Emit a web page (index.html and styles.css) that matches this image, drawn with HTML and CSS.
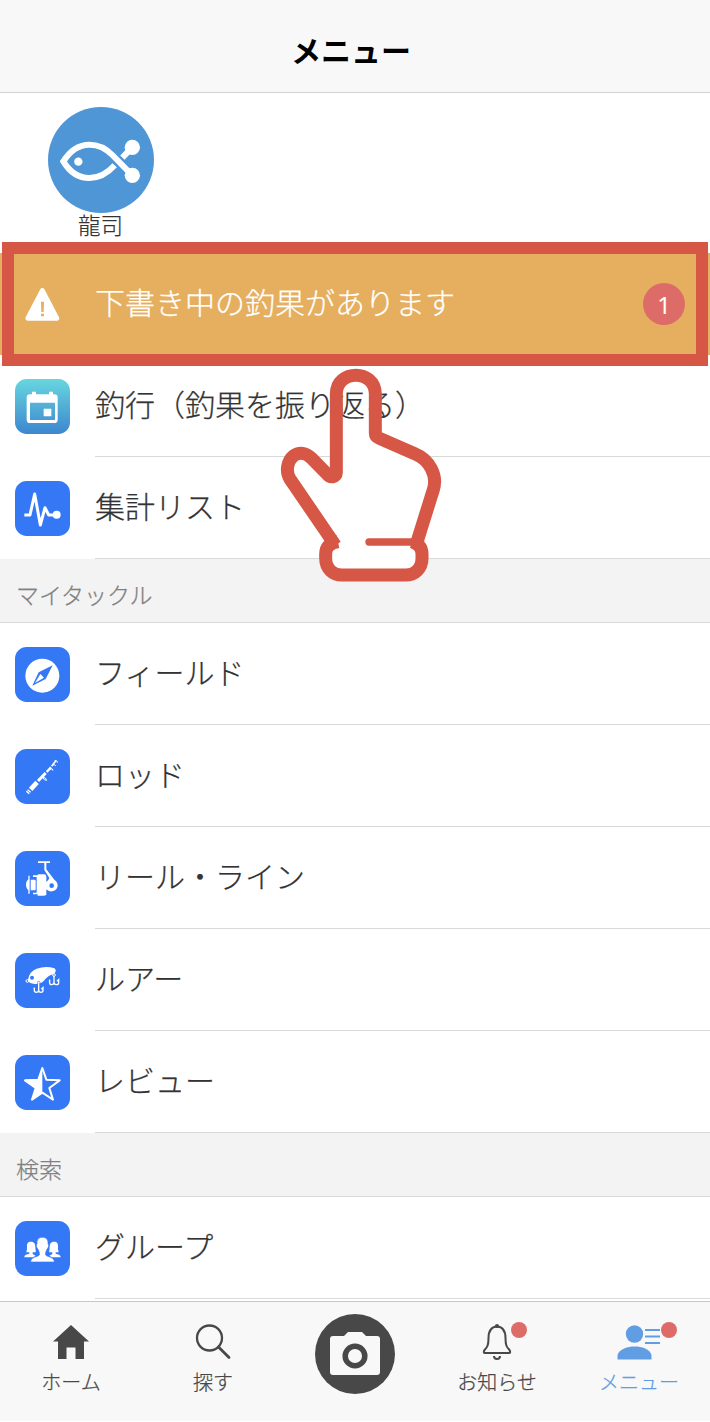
FILE: index.html
```html
<!DOCTYPE html>
<html lang="ja">
<head>
    <meta charset="UTF-8">
    <meta name="viewport" content="width=device-width, initial-scale=1.0">
    <title>メニュー</title>
    <link rel="stylesheet" href="styles.css">
</head>
<body>
    <header>
        <h1>メニュー</h1>
    </header>
    <main>
        <div class="profile">
            <svg class="avatar" viewBox="142 52 318 318">
                <circle cx="301" cy="211" r="159" fill="#4f96d6"/>
                <g fill="none" stroke="#fff" stroke-width="18">
                    <path d="M395 257L335 196Q305 165 266 165Q220 165 188 215Q218 265 266 265Q308 265 342 227"/>
                    <path d="M365 204L395 173"/>
                </g>
                <g fill="#fff">
                    <circle cx="395" cy="173" r="23"/>
                    <circle cx="395" cy="257" r="23"/>
                    <circle cx="233" cy="216" r="12.500"/>
                </g>
            </svg>
            <span class="user-name">龍司</span>
        </div>

        <div class="row draft">
            <svg class="icon" viewBox="0 0 165 165">
                <path d="M82 40L126 124H38Z" fill="#fff" stroke="#fff" stroke-width="14" stroke-linejoin="round"/>
                <path d="M78 74H87L86 105H79ZM78 110H87V118H78Z" fill="#e5af5f"/>
            </svg>
            <span class="label">下書き中の釣果があります</span>
            <span class="count">1</span>
            <div class="highlight"></div>
            <svg class="hand" viewBox="0 0 600 720">
                <path d="M229 285H350L470 312Q535 345 519 410L465 580L485 630Q480 675 440 675H245Q200 675 197 630L222 580L90 385Q70 340 100 318Q130 300 155 325L200 372Q229 380 229 370Z" fill="#fff"/>
                <g fill="none" stroke="#d65745" stroke-width="39" stroke-linejoin="round">
                    <path d="M226 586L90 387C76 364 82 333 100 318C118 305 138 308 155 325L201 372C211 385 229 382 229 368V131C231 57 344 57 346 131V250Q346 260 358 265L466 312C510 330 533 378 520 419L471 576"/>
                    <path d="M234 575C209 580 197 591 197 612V625C197 656 219 675 245 675H438C464 675 486 656 486 625V612C486 591 474 580 455 575"/>
                    <path d="M327 576H462" stroke-width="22" stroke-linecap="round"/>
                </g>
            </svg>
        </div>
        <div class="row">
            <svg class="icon" viewBox="0 0 165 165">
                <defs>
                    <linearGradient id="trip" x1="0" y1="0" x2="0" y2="1">
                        <stop offset="0" stop-color="#68d6df"/>
                        <stop offset="1" stop-color="#3c86cf"/>
                    </linearGradient>
                </defs>
                <rect width="165" height="165" rx="35" fill="url(#trip)"/>
                <path fill="#fff" fill-rule="evenodd" d="M45 46H51V38H63V46H102V38H114V46H118Q128 46 128 56V122Q128 132 118 132H45Q35 132 35 122V56Q35 46 45 46ZM45 71V123H120V71ZM86 89H109V112H86Z"/>
            </svg>
            <span class="label">釣行（釣果を振り返る）</span>
        </div>
        <div class="row">
            <svg class="icon" viewBox="0 0 165 165">
                <rect width="165" height="165" rx="35" fill="#3478f6"/>
                <path d="M28 102H45L59 39L76 132L90 80L101 102H120" fill="none" stroke="#fff" stroke-width="9" stroke-linejoin="round"/>
                <circle cx="125" cy="101" r="12" fill="#fff"/>
            </svg>
            <span class="label">集計リスト</span>
        </div>

        <h2>マイタックル</h2>
        <div class="row">
            <svg class="icon" viewBox="0 0 165 165">
                <rect width="165" height="165" rx="35" fill="#3478f6"/>
                <circle cx="82" cy="86" r="51" fill="#fff"/>
                <path d="M113 55L71 76L52 116L92 96Z" fill="#3478f6"/>
                <path d="M76 81L87 92L60 108Z" fill="#fff"/>
            </svg>
            <span class="label">フィールド</span>
        </div>
        <div class="row">
            <svg class="icon" viewBox="0 0 165 165">
                <rect width="165" height="165" rx="35" fill="#3478f6"/>
                <g fill="none" stroke="#fff">
                    <path d="M37 132L44 124" stroke-width="12" stroke-dasharray="4 2"/>
                    <path d="M47 121L66 100" stroke-width="14"/>
                    <path d="M69 96L92 72" stroke-width="9"/>
                    <path d="M95 69L108 55" stroke-width="7"/>
                    <path d="M110 52L122 36" stroke-width="5"/>
                    <path d="M82 84L91 87L95 94L88 92ZM105 60L112 60L114 65M111 48L119 47L122 51M119 34L126 36L127 41" stroke-width="3"/>
                </g>
            </svg>
            <span class="label">ロッド</span>
        </div>
        <div class="row">
            <svg class="icon" viewBox="0 0 165 165">
                <rect width="165" height="165" rx="35" fill="#3478f6"/>
                <g fill="#fff">
                    <path d="M69 31H105V36H94V55L118 86Q128 92 128 104Q127 116 115 120Q102 124 94 115V131Q92 134 84 134H68V130H54V125H65V78H54V73H67L70 70H88Q94 71 94 77V93Q101 87 103 81L88 57V36H69Z"/>
                    <path d="M47 86H59Q62 86 62 91V114Q62 118 59 118H47Z"/>
                    <path d="M42 84V118Q33 113 33 101Q33 89 42 84Z"/>
                    <path d="M40 74H44V128H40Z"/>
                </g>
                <circle cx="110" cy="104" r="7" fill="#3478f6"/>
            </svg>
            <span class="label">リール・ライン</span>
        </div>
        <div class="row">
            <svg class="icon" viewBox="0 0 165 165">
                <rect width="165" height="165" rx="35" fill="#3478f6"/>
                <path d="M39 80Q43 55 65 47Q93 38 118 46Q126 52 119 61Q102 67 91 78Q81 94 60 93Q40 91 39 80Z" fill="#fff"/>
                <circle cx="51" cy="74" r="6" fill="#3478f6"/>
                <g fill="none" stroke="#fff" stroke-width="4">
                    <circle cx="37" cy="84" r="4" stroke-width="3"/>
                    <circle cx="71" cy="89" r="4" stroke="#3478f6" stroke-width="2"/>
                    <circle cx="117" cy="66" r="4" stroke-width="3"/>
                    <path d="M71 91V115M57 109L58 104V112Q58 118 64 118Q71 118 71 111Q71 118 78 118Q84 118 84 112V104L79 109"/>
                    <path d="M117 69V92M103 86L104 80V89Q104 95 110 95Q117 95 117 88Q117 95 124 95Q131 95 131 89V80L126 85"/>
                </g>
            </svg>
            <span class="label">ルアー</span>
        </div>
        <div class="row">
            <svg class="icon" viewBox="0 0 165 165">
                <rect width="165" height="165" rx="35" fill="#3478f6"/>
                <path d="M82 39L94 74L134 76L103 99L114 134L82 113L51 134L62 99L30 76L70 74Z" fill="none" stroke="#fff" stroke-width="6" stroke-linejoin="round"/>
                <path d="M82 39V113L51 134L62 99L30 76L70 74Z" fill="#fff"/>
            </svg>
            <span class="label">レビュー</span>
        </div>

        <h2>検索</h2>
        <div class="row">
            <svg class="icon" viewBox="0 0 165 165">
                <rect width="165" height="165" rx="35" fill="#3478f6"/>
                <defs>
                    <path id="member" d="M48 62C58 62 61 69 61 79C61 86 63 88 62 94H53V99L62 104L54 109H28C28 101 36 100 43 98V94H34Q37 85 36 78C35 68 38 62 48 62Z"/>
                </defs>
                <g fill="#fff">
                    <use href="#member"/>
                    <use href="#member" transform="matrix(-1 0 0 1 165 0)"/>
                    <path d="M82 49C95 49 100 57 99 69C103 70 100 83 96 84C95 89 92 92 92 95V102C98 109 118 107 118 123H47C47 107 67 109 73 102V95C73 92 70 89 69 84C65 83 62 70 66 69C65 57 70 49 82 49Z" stroke="#3478f6" stroke-width="2"/>
                </g>
            </svg>
            <span class="label">グループ</span>
        </div>
    </main>
    <nav>
        <a class="tab">
            <svg viewBox="0 0 40 40">
                <path d="M20 3L38 19.500H33V37H24.500V25.500H15.500V37H7V19.500H2Z" fill="#484848"/>
            </svg>
            ホーム
        </a>
        <a class="tab">
            <svg viewBox="0 0 40 40">
                <circle cx="16.500" cy="16" r="12.500" fill="none" stroke="#484848" stroke-width="2.300"/>
                <path d="M25.500 25L36 35.500" stroke="#484848" stroke-width="2.800" stroke-linecap="round"/>
            </svg>
            探す
        </a>
        <a class="camera">
            <svg viewBox="0 0 80 80">
                <circle cx="40" cy="40" r="40" fill="#484848"/>
                <path d="M18 22H29L33 18H47L51 22H62Q65 22 65 25V58Q65 61 62 61H18Q15 61 15 58V25Q15 22 18 22Z" fill="#f8f8f8"/>
                <circle cx="40" cy="42" r="9.800" fill="none" stroke="#484848" stroke-width="5.500"/>
            </svg>
        </a>
        <a class="tab">
            <svg viewBox="0 0 40 40">
                <path d="M20 4.500C13 5 11.500 11 11.500 16C11.500 23 10.500 25 7.500 28Q6 31 8 31H32Q34 31 32.500 28C29.500 25 28.500 23 28.500 16C28.500 11 27 5 20 4.500Z" fill="none" stroke="#484848" stroke-width="2"/>
                <circle cx="20" cy="4" r="2" fill="#484848"/>
                <path d="M17 34Q17 37 20 37Q23 37 23 34" fill="none" stroke="#484848" stroke-width="2"/>
            </svg>
            お知らせ
            <span class="dot"></span>
        </a>
        <a class="tab active">
            <svg viewBox="0 0 40 40">
                <g fill="#609de3">
                    <circle cx="15.500" cy="12" r="8.700"/>
                    <path d="M-1.500 37.500V33C0 27 9 24.500 15.500 24.500C23 24.500 31 27 32.500 33V37.500Z"/>
                    <path d="M26 7H41V9H26ZM26 13.500H41V15.500H26ZM26 20H41V22H26Z"/>
                </g>
            </svg>
            メニュー
            <span class="dot"></span>
        </a>
    </nav>
</body>
</html>
```
FILE: styles.css
```css
* {
    box-sizing: border-box;
}

body {
    display: flex;
    flex-direction: column;
    height: 1421px;
    margin: 0;
    background-color: #fff;
    color: #333;
    font-family: 'Noto Sans CJK JP', sans-serif;
    font-weight: 300;
    -webkit-text-stroke: 0.25px;
    overflow: hidden;
}

header {
    height: 93px;
    flex: none;
    background-color: #f8f8f8;
    border-bottom: 1px solid #d3d3d3;
    text-align: center;
    padding-right: 8px;
}

h1 {
    margin: 0;
    padding-top: 6px;
    color: #000;
    font-size: 30px;
    line-height: 86px;
    font-weight: 700;
    -webkit-text-stroke: 0;
}

main {
    flex: 1;
    min-height: 0;
}

.profile {
    display: flex;
    flex-direction: column;
    align-items: center;
    width: 201px;
    height: 160px;
    padding-top: 14px;
}

.avatar {
    width: 106px;
    height: 106px;
    flex: none;
}

.user-name {
    font-size: 22.5px;
    line-height: 22px;
}

.row {
    display: flex;
    align-items: center;
    height: 102px;
    padding-left: 15px;
}

.icon {
    width: 55px;
    height: 55px;
    flex: none;
    margin-right: 25px;
}

.label {
    flex: 1;
    height: 102px;
    border-bottom: 1px solid #d9d9d9;
    font-size: 30px;
    line-height: 97px;
    white-space: nowrap;
}

.draft {
    position: relative;
    background-color: #e5af5f;
    color: #fff;
    padding-right: 25px;
}

.draft .label {
    border: none;
}

.count {
    width: 42px;
    height: 42px;
    border-radius: 50%;
    background-color: #dd6c68;
    font-family: 'Noto Sans', sans-serif;
    font-size: 24px;
    font-weight: 400;
    line-height: 44px;
    text-align: center;
    -webkit-text-stroke: 0;
}

/* tutorial frame and pointer */
.highlight {
    position: absolute;
    top: -11px;
    left: 2px;
    right: 2px;
    height: 124px;
    border: 12px solid #d65745;
}

.hand {
    position: absolute;
    top: 97px;
    left: 260px;
    width: 200px;
    height: 240px;
    z-index: 1;
}

h2 {
    height: 64px;
    margin: 0;
    padding: 4px 16px 0;
    background-color: #f3f3f3;
    border-bottom: 1px solid #d9d9d9;
    color: #808080;
    font-size: 23px;
    font-weight: 300;
    line-height: 62px;
}

nav {
    display: grid;
    grid-template-columns: repeat(5, 1fr);
    flex: none;
    height: 120px;
    background-color: #f8f8f8;
    border-top: 1px solid #c8c8c8;
}

.tab {
    position: relative;
    display: flex;
    flex-direction: column;
    align-items: center;
    padding-top: 20px;
    color: #484848;
    font-size: 20px;
    line-height: 40px;
}

.tab svg {
    width: 40px;
    height: 40px;
    overflow: visible;
}

.active {
    color: #609de3;
}

.dot {
    position: absolute;
    top: 20px;
    left: 85px;
    width: 16px;
    height: 16px;
    border-radius: 50%;
    background-color: #dd6c68;
}

.active .dot {
    left: 93px;
}

.camera svg {
    display: block;
    width: 80px;
    height: 80px;
    margin: 12px auto 0;
}
```
